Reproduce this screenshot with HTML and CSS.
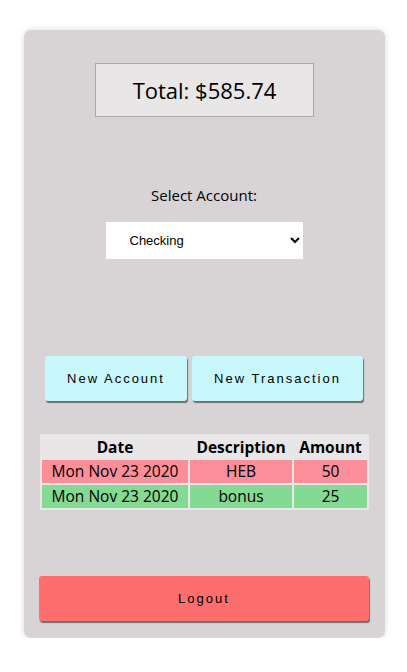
FILE: index.html
```html
<!DOCTYPE html>
<html>
<head>
<meta charset="utf-8">
<link rel="stylesheet" href="styles.css">
</head>
<body>
<div class="card">
  <div class="total">Total: $585.74</div>
  <div class="select-label">Select Account:</div>
  <div class="select-wrap">
    <select class="account-select">
      <option>Checking</option>
    </select>
  </div>
  <div class="actions">
    <button class="btn btn-new-acc">New Account</button>
    <button class="btn btn-new-tx">New Transaction</button>
  </div>
  <table class="tx-table">
    <thead>
      <tr><th class="c-date">Date</th><th class="c-desc">Description</th><th class="c-amt">Amount</th></tr>
    </thead>
    <tbody>
      <tr class="debit"><td>Mon Nov 23 2020</td><td>HEB</td><td>50</td></tr>
      <tr class="credit"><td>Mon Nov 23 2020</td><td>bonus</td><td>25</td></tr>
    </tbody>
  </table>
  <button class="btn logout">Logout</button>
</div>
</body>
</html>
```
FILE: styles.css
```css
html, body { margin: 0; padding: 0; background: #fff; }
body { font-family: "Open Sans", "Noto Sans", sans-serif; color: #000; }
.card {
  width: 361px;
  margin: 30px 0 0 24px;
  height: 608px;
  box-sizing: border-box;
  background: #d8d4d5;
  border-radius: 7px;
  box-shadow: 0 0 6px rgba(0,0,0,0.15);
  padding: 33px 16px 0 15px;
  display: flex;
  flex-direction: column;
  align-items: center;
}
.total {
  width: 219px;
  height: 54px;
  box-sizing: border-box;
  border: 1px solid #a9a7a8;
  background: #e8e6e7;
  font-size: 22px;
  display: flex;
  align-items: center;
  justify-content: center;
  margin-left: 1px;
}
.select-label {
  margin-top: 67px;
  font-size: 15px;
  line-height: 22px;
}
.select-wrap { margin-top: 16px; }
.account-select {
  width: 197px;
  height: 37px;
  border: none;
  background: #fff;
  font-family: "Liberation Sans", Arial, sans-serif;
  font-size: 13px;
  padding-left: 20px;
  color: #000;
}
.actions {
  margin-top: 97px;
  display: flex;
  gap: 5px;
}
.btn {
  border: none;
  font-family: "Liberation Sans", Arial, sans-serif;
  font-size: 13px;
  letter-spacing: 2px;
  color: #000;
  border-radius: 3px;
  box-shadow: 1px 2px 1px #6e6e6e;
  cursor: pointer;
}
.btn-new-acc, .btn-new-tx { background: #c8f8fc; height: 45px; }
.btn-new-acc { width: 142px; }
.btn-new-tx { width: 171px; }
.tx-table {
  margin-top: 33px;
  width: 329px;
  border-collapse: separate;
  border-spacing: 2px;
  background: #e8e6e7;
  font-size: 15.5px;
  margin-left: 1px;
}
.tx-table th { font-weight: bold; height: 22px; padding: 0; line-height: 22px; }
.tx-table td { text-align: center; height: 23px; padding: 0; line-height: 23px; }
.c-date { width: 146px; }
.c-desc { width: 102px; }
.debit td { background: #fb8e98; }
.credit td { background: #84da92; }
.logout {
  margin-top: 66px;
  width: 330px;
  height: 45px;
  background: #ff6e6e;
}
```
